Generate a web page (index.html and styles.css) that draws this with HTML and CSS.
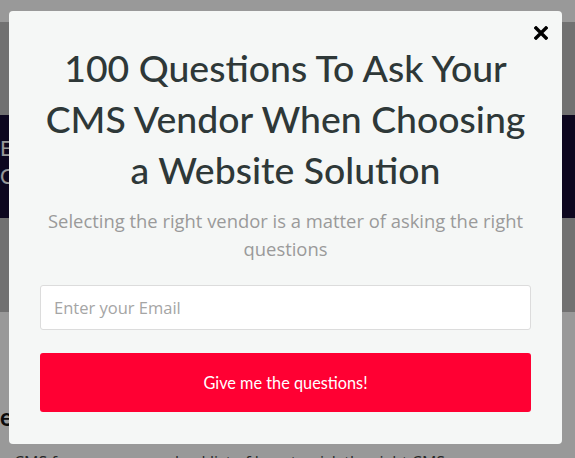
FILE: index.html
```html
<!DOCTYPE html>
<html>
<head>
    <title>100 Questions To Ask Your CMS Vendor</title>
    <meta charset="utf-8">
    <meta name="viewport" content="width=device-width, initial-scale=1">
    <link rel="stylesheet" href="styles.css">
</head>
<body>
    <div class="page">
        <div class="topbar"></div>
        <div class="hero">
            <div class="hero-band">
                <div class="band-line">EXPERIENCE</div>
                <div class="band-line">CONTENT</div>
            </div>
        </div>
        <h2 class="page-title">enterprise CMS buying guide</h2>
        <p class="page-text">CMS for everyone: a checklist of how to pick the right CMS</p>
    </div>

    <div class="overlay">
        <div class="modal">
            <button class="close" aria-label="Close">
                <svg width="14" height="14" viewBox="0 0 14 14">
                    <path d="M2 2 L12 12 M12 2 L2 12" stroke="#000" stroke-width="3.4" stroke-linecap="square"/>
                </svg>
            </button>
            <h1 class="title">100 Questions To Ask Your CMS Vendor When Choosing a Website Solution</h1>
            <p class="subtitle">Selecting the right vendor is a matter of asking the right questions</p>
            <form class="signup">
                <input class="email" type="email" placeholder="Enter your Email" autofocus>
                <button class="submit" type="button">Give me the questions!</button>
            </form>
        </div>
    </div>
</body>
</html>
```

FILE: styles.css
```css
* { box-sizing: border-box; }
body { margin: 0; background: #fff; font-family: "Open Sans", sans-serif; overflow: hidden; }

/* page behind the popup */
.page { height: 458px; }
.topbar { height: 22px; background: #fff; }
.hero { height: 290px; padding-top: 93px; background: #bcbcbc; }
.hero-band { height: 103px; background: #170d35; padding-top: 19px; }
.band-line { color: #fff; font-family: "Lato", sans-serif; font-size: 21px; line-height: 28px; letter-spacing: 1px; }
.page-title { margin: 90px 0 0; font-family: "Lato", sans-serif; font-size: 24px; font-weight: 700; color: #111; line-height: 30px; }
.page-text { margin: 19px 0 0 14px; font-size: 16px; color: #444; }

/* popup */
.overlay {
    position: fixed;
    inset: 0;
    background: rgba(0, 0, 0, 0.4);
    padding: 11px 13px 14px 9px;
}
.modal {
    position: relative;
    height: 100%;
    background: #f5f7f6;
    border-radius: 4px;
    padding: 31px 31px 0;
    text-align: center;
}
.close {
    position: absolute;
    top: 15px;
    right: 14px;
    padding: 0;
    border: 0;
    background: none;
    line-height: 0;
    cursor: pointer;
}
.title {
    margin: 0;
    font-family: "Lato", sans-serif;
    font-weight: 500;
    font-size: 37.4px;
    line-height: 51px;
    color: #2e3838;
}
.subtitle {
    margin: 12px 0 0;
    font-size: 18.4px;
    line-height: 28px;
    color: #9a9a9a;
}
.signup { margin-top: 22px; display: flex; flex-direction: column; gap: 23px; }
.email {
    height: 45px;
    border: 1px solid #dcdcdc;
    border-radius: 3px;
    background: #fff;
    padding: 0 13px;
    font-family: "Open Sans", sans-serif;
    font-size: 16.5px;
    color: #333;
    outline: none;
}
.email::placeholder { color: #a5a5a5; }
.submit {
    height: 59px;
    border: 0;
    border-radius: 3px;
    background: #ff0033;
    color: #fff;
    font-family: "Lato", sans-serif;
    font-size: 16.3px;
    cursor: pointer;
}
```
